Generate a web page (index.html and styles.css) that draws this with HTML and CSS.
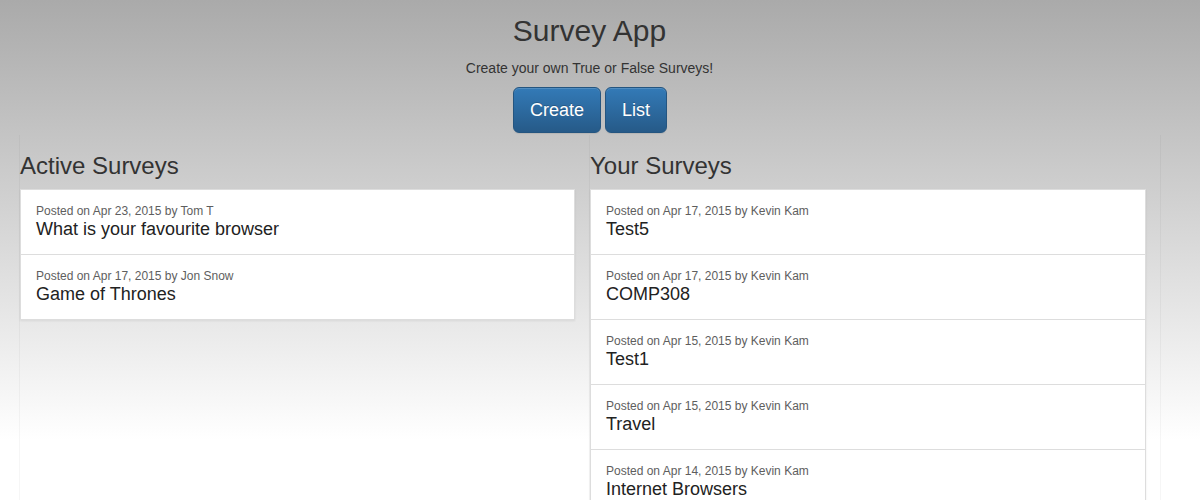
FILE: index.html
```html
<!DOCTYPE html>
<html>
<head>
<meta charset="utf-8">
<title>Survey App</title>
<link rel="stylesheet" href="styles.css">
</head>
<body>
<header class="header">
  <h1 class="title">Survey App</h1>
  <p class="subtitle">Create your own True or False Surveys!</p>
  <div class="actions">
    <a class="btn">Create</a>
    <a class="btn">List</a>
  </div>
</header>
<main class="columns">
  <section class="col">
    <h3 class="col-title">Active Surveys</h3>
    <div class="list">
      <div class="item"><div class="meta">Posted on Apr 23, 2015 by Tom T</div><div class="name">What is your favourite browser</div></div>
      <div class="item"><div class="meta">Posted on Apr 17, 2015 by Jon Snow</div><div class="name">Game of Thrones</div></div>
    </div>
  </section>
  <section class="col col-last">
    <h3 class="col-title">Your Surveys</h3>
    <div class="list">
      <div class="item"><div class="meta">Posted on Apr 17, 2015 by Kevin Kam</div><div class="name">Test5</div></div>
      <div class="item"><div class="meta">Posted on Apr 17, 2015 by Kevin Kam</div><div class="name">COMP308</div></div>
      <div class="item"><div class="meta">Posted on Apr 15, 2015 by Kevin Kam</div><div class="name">Test1</div></div>
      <div class="item"><div class="meta">Posted on Apr 15, 2015 by Kevin Kam</div><div class="name">Travel</div></div>
      <div class="item"><div class="meta">Posted on Apr 14, 2015 by Kevin Kam</div><div class="name">Internet Browsers</div></div>
    </div>
  </section>
</main>
</body>
</html>
```

FILE: styles.css
```css
html, body {
  margin: 0;
  padding: 0;
}
body {
  font-family: "Liberation Sans", Arial, Helvetica, sans-serif;
  font-size: 14px;
  line-height: 20px;
  color: #333;
  background: #fff linear-gradient(to bottom, #aaaaaa 0px, #ffffff 440px) no-repeat;
  height: 500px;
  overflow: hidden;
}
.header {
  text-align: center;
  padding: 14px 21px 0 0;
}
.title {
  margin: 0 0 11px;
  font-size: 30px;
  line-height: 33px;
  font-weight: 500;
  color: #333;
}
.subtitle {
  margin: 0 0 9px;
  font-size: 14px;
  line-height: 20px;
}
.actions {
  display: flex;
  justify-content: center;
  gap: 4px;
  padding-left: 1px;
}
.btn {
  display: block;
  box-sizing: border-box;
  height: 46px;
  padding: 10px 16px;
  font-size: 18px;
  line-height: 24px;
  color: #fff;
  text-shadow: 0 -1px 0 rgba(0, 0, 0, 0.2);
  background: linear-gradient(to bottom, #337ab7 0%, #265a88 100%);
  border: 1px solid #245580;
  border-radius: 6px;
  box-shadow: inset 0 1px 0 rgba(255, 255, 255, 0.15), 0 1px 1px rgba(0, 0, 0, 0.075);
}
.columns {
  display: flex;
  margin: 2px 0 0 19px;
  height: 400px;
}
.col {
  box-sizing: border-box;
  width: 570px;
  padding: 0 14px 0 0;
  border-left: 1px solid rgba(0, 0, 0, 0.035);
}
.col-last {
  width: 572px;
  border-right: 1px solid rgba(0, 0, 0, 0.035);
}
.col-title {
  margin: 18px 0 10px;
  font-size: 24px;
  line-height: 26px;
  font-weight: 500;
  color: #333;
}
.list {
  background: #fff;
  box-shadow: 0 1px 2px rgba(0, 0, 0, 0.075);
}
.item {
  padding: 13px 15px 15px;
  border: 1px solid #ddd;
  margin-bottom: -1px;
  background: #fff;
}
.meta {
  font-size: 12px;
  line-height: 17px;
  color: #5e5e5e;
}
.name {
  font-size: 18px;
  line-height: 19px;
  color: #222;
}
```
